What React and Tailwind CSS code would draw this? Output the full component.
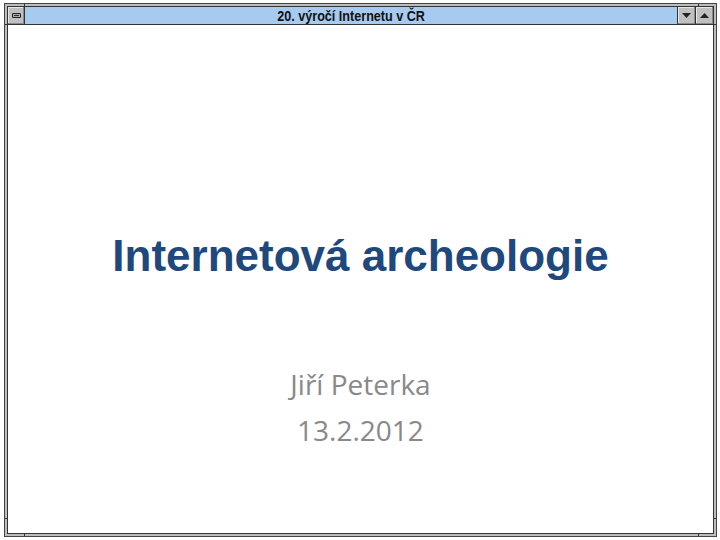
function Arrow({ up }) {
  return (
    <svg width="9" height="5" viewBox="0 0 9 5">
      <path d={up ? "M4.5 0L9 5H0Z" : "M0 0H9L4.5 5Z"} fill="#222" />
    </svg>
  );
}

function TitleButton({ children, className }) {
  return (
    <div className={"flex items-center justify-center bg-[#c0c0c0] border-[#333] shadow-[inset_-1px_-1px_0_#8a8a8a,inset_1px_1px_0_#e8e8e8] " + className}>
      {children}
    </div>
  );
}

export default function App() {
  return (
    <div className="w-[720px] h-[540px] bg-white pt-[3px] pr-[3px] pb-[3px] pl-[4px] font-['Liberation_Sans',sans-serif] overflow-hidden">
      <div className="relative w-full h-full flex flex-col border border-[#444] bg-[#bdbdbd] p-[2px]">
        <div className="flex-1 flex flex-col border border-[#333] bg-white min-h-0">
          <div className="flex h-[18px] shrink-0 border-b border-[#333]">
            <TitleButton className="w-[17px] border-r">
              <div className="w-[9px] h-[5px] bg-[#333] border border-[#222] rounded-[1px] shadow-[inset_0_0_0_1px_#aaa]"></div>
            </TitleButton>
            <div className="flex-1 flex items-center justify-center bg-[#a6caf0] text-[14px] font-bold text-[#111] leading-none">
              <span className="scale-x-90">20. výročí Internetu v ČR</span>
            </div>
            <TitleButton className="w-[18px] border-l">
              <Arrow />
            </TitleButton>
            <TitleButton className="w-[18px] border-l">
              <Arrow up />
            </TitleButton>
          </div>
          <div className="flex-1 flex flex-col items-center">
            <h1 className="mt-[206px] text-[44px] leading-[50px] font-bold text-[#1f497d]">Internetová archeologie</h1>
            <div className="mt-[80px] text-[28px] leading-[46px] text-[#898989] text-center font-['Open_Sans',sans-serif]">
              <p>Jiří Peterka</p>
              <p>13.2.2012</p>
            </div>
          </div>
        </div>
        {/* resize-corner ticks across the frame */}
        <div className="absolute top-0 left-[19px] w-px h-[3px] bg-[#333]"></div>
        <div className="absolute top-0 right-[17px] w-px h-[3px] bg-[#333]"></div>
        <div className="absolute bottom-0 left-[19px] w-px h-[3px] bg-[#333]"></div>
        <div className="absolute bottom-0 right-[17px] w-px h-[3px] bg-[#333]"></div>
        <div className="absolute top-[20px] left-0 h-px w-[3px] bg-[#333]"></div>
        <div className="absolute top-[20px] right-0 h-px w-[3px] bg-[#333]"></div>
        <div className="absolute bottom-[17px] left-0 h-px w-[3px] bg-[#333]"></div>
        <div className="absolute bottom-[17px] right-0 h-px w-[3px] bg-[#333]"></div>
      </div>
    </div>
  );
}
